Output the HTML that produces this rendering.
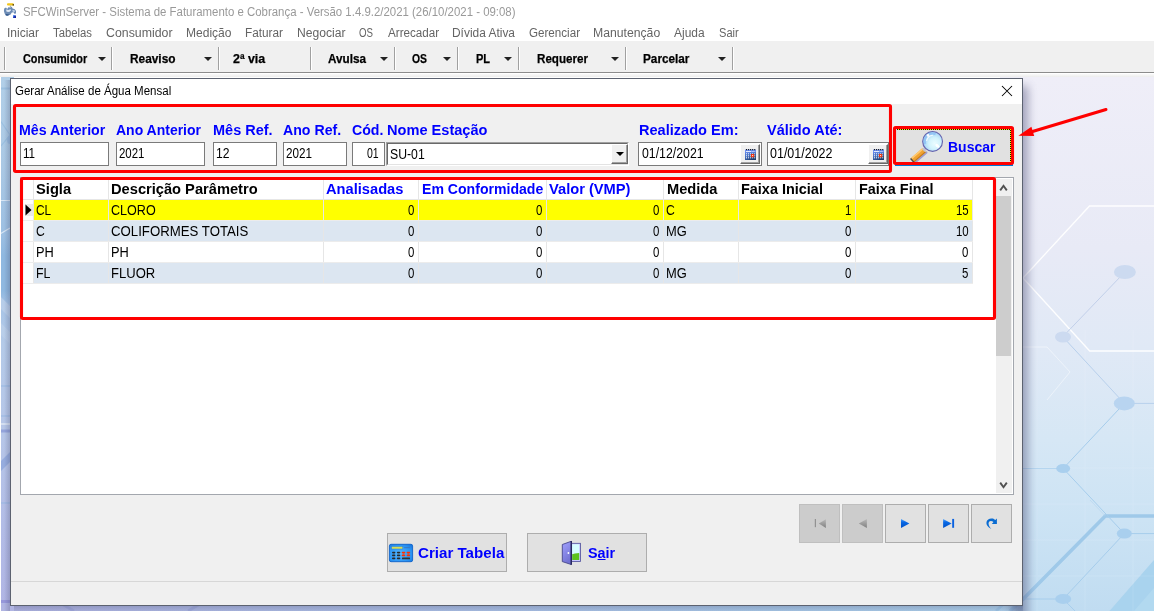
<!DOCTYPE html>
<html><head><meta charset="utf-8"><title>SFCWinServer</title><style>
html,body{margin:0;padding:0;}
body{width:1154px;height:611px;position:relative;overflow:hidden;background:#fff;font-family:"Liberation Sans",sans-serif;}
.t{position:absolute;white-space:nowrap;transform-origin:0 50%;}
.r{position:absolute;}
.tri{position:absolute;width:0;height:0;border-left:4px solid transparent;border-right:4px solid transparent;border-top:4px solid #222;}
#dlg{position:absolute;left:10px;top:78px;width:1013px;height:528px;box-sizing:border-box;background:#f0f0f0;border:1px solid #5c6270;}
</style></head><body>
<svg class="r" style="left:0;top:77px" width="1154" height="534" viewBox="0 77 1154 534">
<defs>
<linearGradient id="gR" gradientUnits="userSpaceOnUse" x1="0" y1="77" x2="0" y2="611">
<stop offset="0" stop-color="#efeef8"/><stop offset="0.32" stop-color="#e8eaf6"/><stop offset="0.51" stop-color="#e0e9f6"/><stop offset="0.68" stop-color="#d6e7f5"/><stop offset="0.83" stop-color="#cce3f4"/><stop offset="1" stop-color="#c0dcf1"/>
</linearGradient>
<linearGradient id="gL" gradientUnits="userSpaceOnUse" x1="0" y1="77" x2="0" y2="611">
<stop offset="0" stop-color="#b2cfe8"/><stop offset="0.167" stop-color="#aac8e4"/><stop offset="0.296" stop-color="#9cbfe2"/><stop offset="0.335" stop-color="#8fb8e0"/><stop offset="0.4" stop-color="#8fb8e0"/><stop offset="0.43" stop-color="#a8c4e6"/><stop offset="0.5" stop-color="#b4cae8"/><stop offset="0.67" stop-color="#b6c6e8"/><stop offset="0.84" stop-color="#b2bce6"/><stop offset="1" stop-color="#b0b4e4"/>
</linearGradient>
<linearGradient id="gB" gradientUnits="userSpaceOnUse" x1="0" y1="0" x2="1030" y2="0">
<stop offset="0" stop-color="#b0b4e2"/><stop offset="0.38" stop-color="#adc0e6"/><stop offset="0.75" stop-color="#a9cae9"/><stop offset="1" stop-color="#b0d4ee"/>
</linearGradient>
<linearGradient id="shR" gradientUnits="userSpaceOnUse" x1="1023" y1="0" x2="1036" y2="0">
<stop offset="0" stop-color="#303050" stop-opacity="0.38"/><stop offset="0.4" stop-color="#303050" stop-opacity="0.17"/><stop offset="1" stop-color="#303050" stop-opacity="0"/>
</linearGradient>
<linearGradient id="shB" gradientUnits="userSpaceOnUse" x1="0" y1="606" x2="0" y2="614">
<stop offset="0" stop-color="#303058" stop-opacity="0.22"/><stop offset="1" stop-color="#303058" stop-opacity="0"/>
</linearGradient>
<linearGradient id="shL" gradientUnits="userSpaceOnUse" x1="4" y1="0" x2="10" y2="0">
<stop offset="0" stop-color="#303050" stop-opacity="0"/><stop offset="1" stop-color="#303050" stop-opacity="0.22"/>
</linearGradient>
<filter id="shblur" x="-200%" y="-5%" width="500%" height="110%"><feGaussianBlur stdDeviation="5"/></filter>
<filter id="soft" x="-20%" y="-20%" width="140%" height="140%"><feGaussianBlur stdDeviation="0.5"/></filter>
</defs>
<rect x="1000" y="77" width="154" height="534" fill="url(#gR)"/>
<rect x="0" y="77" width="14" height="534" fill="url(#gL)"/>
<rect x="0" y="604" width="1023" height="7" fill="url(#gB)"/>
<!-- lower-right saturated wedge -->
<path d="M1154 560 L1109.5 611 L1154 611 Z" fill="#a9d3ee"/>
<path d="M1154 588 L1134 611 L1154 611 Z" fill="#b2d9f0"/>
<!-- faint grid -->
<g stroke="#ffffff" stroke-width="1" opacity="0.10">
<path d="M1037 330V611M1085 330V611M1133 330V611"/>
<path d="M1023 468H1154M1023 504H1154M1023 540H1154M1023 576H1154"/>
</g>
<!-- thick pale band hexagon -->
<path d="M1154 516 L1105.3 516 L1023.3 599 L1010 611" stroke="#9fc9e9" stroke-width="3.6" fill="none" filter="url(#soft)"/>
<path d="M1105.3 516 L1090 500" stroke="#b4d4ee" stroke-width="1" fill="none" opacity="0.6"/>
<!-- white hexagon -->
<path d="M1154 206 L1089.5 206 L1023 278 L1089.7 351 L1154 351" stroke="#ffffff" stroke-width="1.3" fill="none" opacity="0.95"/>
<path d="M1000 300 L1023 278" stroke="#ffffff" stroke-width="1" fill="none" opacity="0.6"/>
<!-- thin blue lines -->
<g stroke="#c2d0ea" stroke-width="1" fill="none">
<path d="M1124.9 272 L1063 336.5"/>
</g>
<g stroke="#a6cdec" stroke-width="1" fill="none">
<path d="M1063 337 L1124.3 403.4 L1154 403.4" stroke="#b8d0ec"/>
<path d="M1023 347 L1047 347 L1070 372 L1047 400" stroke="#ffffff" opacity="0.45"/>
<path d="M1124.3 403.4 L1063.2 468.5 L1124.3 533.6 L1154 533.6"/>
<path d="M1063.2 468.5 L1015 468.5" opacity="0.7"/>
<path d="M1124.3 533.6 L1063.2 599 L1015 599"/>
<path d="M1063.2 599 L1075 611"/>
</g>
<!-- nodes -->
<g fill="#ccdaf0">
<ellipse cx="1124.9" cy="272" rx="11" ry="7"/>
<ellipse cx="1063" cy="337" rx="8" ry="5.5"/>
</g>
<g fill="#a9cfee">
<ellipse cx="1124.3" cy="403.4" rx="10.5" ry="7" fill="#b8d4f0"/>
<ellipse cx="1063.2" cy="468.5" rx="7" ry="4.5"/>
<ellipse cx="1124.3" cy="533.6" rx="7.5" ry="5"/>
<ellipse cx="1063.2" cy="599" rx="8" ry="5"/>
</g>
<!-- left strip details -->
<g stroke="#9abfe0" stroke-width="1.2" fill="none" opacity="0.9">
<path d="M0 88.5 L10 88.5" stroke-width="2"/>
<path d="M1 121.6 L10 135 L1 146"/>
</g>
<ellipse cx="10" cy="140" rx="3" ry="4" fill="#98bbe0"/>
<path d="M0 200.5 L10 200.5 M0 234 L10 228" stroke="#e4eef8" stroke-width="1.2" opacity="0.8" fill="none"/>
<path d="M0 296 L10 306 L10 318 L0 308 Z M0 322 L10 332 L10 344 L0 334 Z" fill="#bcd0ea" opacity="0.8"/>
<path d="M0 386 L10 386 M0 416 L10 416 M0 503 L10 503" stroke="#8fb4e0" stroke-width="1" opacity="0.8"/>
<path d="M0 424 L10 424" stroke="#dce6f4" stroke-width="2" opacity="0.8"/>
<path d="M0 431 L10 431" stroke="#8c9cd8" stroke-width="3" opacity="0.8"/>
<path d="M0 462 L10 452 L10 462 L0 472 Z" fill="#90a8dc" opacity="0.85"/>
<path d="M0 601.5 L10 601.5" stroke="#9090d8" stroke-width="3" opacity="0.8"/>
<!-- bottom strip details -->
<g stroke="#98a2d8" stroke-width="3" opacity="0.55" fill="none"><path d="M62 604 L74 611"/><path d="M200 604 L188 611"/></g>
<path d="M996 611 L1010 598" stroke="#9cc6e8" stroke-width="3" opacity="0.8"/>
<!-- dialog shadows -->
<rect x="1012" y="86" width="16" height="544" fill="#3a3a68" opacity="0.42" filter="url(#shblur)"/>
<rect x="14" y="606" width="1009" height="5" fill="url(#shB)"/>
<rect x="4" y="80" width="6" height="531" fill="url(#shL)"/>
</svg>

<div class="r" style="left:0px;top:77px;width:1px;height:534px;background:#fff;"></div>
<div class="r" style="left:0px;top:0px;width:1154px;height:22px;background:#fff;"></div>
<svg class="r" style="left:3px;top:2px" width="16" height="18" viewBox="3 2 16 18">
<rect x="7" y="3.2" width="6.8" height="2.4" rx="1" fill="#f2c418"/>
<rect x="12.6" y="4" width="1.3" height="1.7" fill="#5a4a10"/>
<rect x="9.8" y="5.4" width="1.4" height="2" fill="#b9b9a0"/>
<path d="M4.2 8.6 L6 7.4 L7.2 9 L8.4 7.2 L10.4 7.6 L11.8 6.8 L12.6 8.6 L14.8 9.2 L16 11 L16 13.6 L14.4 13.8 L13.6 12.2 L11.8 12.6 L10.4 14.8 L8 15.6 L5.8 15.4 L4.6 13.4 L3.9 11 Z" fill="#6c8bb4"/>
<path d="M6 9.6 L8.8 10 L10.4 9 L11 10.6 L9.2 12 L6.6 11.8 Z" fill="#dfe8f3"/>
<path d="M12.4 10 L14.6 10.2 L14.8 12 L12.8 11.8 Z" fill="#c9d7ea"/>
<path d="M5.6 14 L9.4 14.4 L8 15.7 L6 15.5 Z" fill="#2f5488"/>
<rect x="13" y="15.3" width="2.8" height="2.6" fill="#1530c0"/>
<rect x="13" y="15.3" width="1.3" height="1.2" fill="#5fa8ff"/>
<rect x="14.6" y="16.4" width="1.3" height="1.5" fill="#071480"/>
</svg>

<div class="t" style="left:23.00px;top:6.04px;font-size:12px;line-height:12px;color:#999;transform:scaleX(0.9515);">SFCWinServer - Sistema de Faturamento e Cobrança - Versão 1.4.9.2/2021 (26/10/2021 - 09:08)</div>
<div class="r" style="left:0px;top:22px;width:1154px;height:19px;background:#fff;"></div>
<div class="t" style="left:7.00px;top:26.84px;font-size:12px;line-height:12px;color:#646464;transform:scaleX(0.9997);">Iniciar</div>
<div class="t" style="left:53.00px;top:26.84px;font-size:12px;line-height:12px;color:#646464;transform:scaleX(0.9429);">Tabelas</div>
<div class="t" style="left:105.50px;top:26.84px;font-size:12px;line-height:12px;color:#646464;transform:scaleX(1.0279);">Consumidor</div>
<div class="t" style="left:185.50px;top:26.84px;font-size:12px;line-height:12px;color:#646464;transform:scaleX(1.0031);">Medição</div>
<div class="t" style="left:245.00px;top:26.84px;font-size:12px;line-height:12px;color:#646464;transform:scaleX(0.9824);">Faturar</div>
<div class="t" style="left:296.50px;top:26.84px;font-size:12px;line-height:12px;color:#646464;transform:scaleX(1.0099);">Negociar</div>
<div class="t" style="left:359.00px;top:26.84px;font-size:12px;line-height:12px;color:#646464;transform:scaleX(0.8075);">OS</div>
<div class="t" style="left:387.50px;top:26.84px;font-size:12px;line-height:12px;color:#646464;transform:scaleX(0.9717);">Arrecadar</div>
<div class="t" style="left:452.00px;top:26.84px;font-size:12px;line-height:12px;color:#646464;transform:scaleX(0.9942);">Dívida Ativa</div>
<div class="t" style="left:529.00px;top:26.84px;font-size:12px;line-height:12px;color:#646464;transform:scaleX(0.9679);">Gerenciar</div>
<div class="t" style="left:592.80px;top:26.84px;font-size:12px;line-height:12px;color:#646464;transform:scaleX(1.0174);">Manutenção</div>
<div class="t" style="left:674.00px;top:26.84px;font-size:12px;line-height:12px;color:#646464;transform:scaleX(0.9970);">Ajuda</div>
<div class="t" style="left:718.80px;top:26.84px;font-size:12px;line-height:12px;color:#646464;transform:scaleX(0.9231);">Sair</div>
<div class="r" style="left:0px;top:41px;width:1154px;height:32px;background:#f0f0f0;border-bottom:1px solid #8c8c8c;box-sizing:border-box;"></div>
<div class="r" style="left:0px;top:73px;width:1154px;height:1px;background:#fff;"></div>
<div class="r" style="left:0px;top:74px;width:1154px;height:3px;background:linear-gradient(180deg,#fafafa,#ececec);"></div>
<div class="t" style="left:22.50px;top:53.42px;font-size:12.5px;line-height:12.5px;color:#000;transform:scaleX(0.8722);font-weight:bold;-webkit-text-stroke:0.25px #000;">Consumidor</div>
<div class="tri" style="left:97.5px;top:57px;"></div>
<div class="t" style="left:129.70px;top:53.42px;font-size:12.5px;line-height:12.5px;color:#000;transform:scaleX(0.9490);font-weight:bold;-webkit-text-stroke:0.25px #000;">Reaviso</div>
<div class="tri" style="left:204.3px;top:57px;"></div>
<div class="t" style="left:232.70px;top:53.42px;font-size:12.5px;line-height:12.5px;color:#000;transform:scaleX(0.9929);font-weight:bold;-webkit-text-stroke:0.25px #000;">2ª via</div>
<div class="t" style="left:328.00px;top:53.42px;font-size:12.5px;line-height:12.5px;color:#000;transform:scaleX(0.9351);font-weight:bold;-webkit-text-stroke:0.25px #000;">Avulsa</div>
<div class="tri" style="left:380.2px;top:57px;"></div>
<div class="t" style="left:412.40px;top:53.42px;font-size:12.5px;line-height:12.5px;color:#000;transform:scaleX(0.8305);font-weight:bold;-webkit-text-stroke:0.25px #000;">OS</div>
<div class="tri" style="left:443.0px;top:57px;"></div>
<div class="t" style="left:475.50px;top:53.42px;font-size:12.5px;line-height:12.5px;color:#000;transform:scaleX(0.8827);font-weight:bold;-webkit-text-stroke:0.25px #000;">PL</div>
<div class="tri" style="left:504.2px;top:57px;"></div>
<div class="t" style="left:536.60px;top:53.42px;font-size:12.5px;line-height:12.5px;color:#000;transform:scaleX(0.9292);font-weight:bold;-webkit-text-stroke:0.25px #000;">Requerer</div>
<div class="tri" style="left:611.2px;top:57px;"></div>
<div class="t" style="left:643.40px;top:53.42px;font-size:12.5px;line-height:12.5px;color:#000;transform:scaleX(0.9403);font-weight:bold;-webkit-text-stroke:0.25px #000;">Parcelar</div>
<div class="tri" style="left:718.0px;top:57px;"></div>
<div class="r" style="left:4px;top:47px;width:1px;height:23px;background:#a0a0a0;"></div>
<div class="r" style="left:5px;top:47px;width:1px;height:23px;background:#fff;"></div>
<div class="r" style="left:111px;top:47px;width:1px;height:23px;background:#a0a0a0;"></div>
<div class="r" style="left:112px;top:47px;width:1px;height:23px;background:#fff;"></div>
<div class="r" style="left:218px;top:47px;width:1px;height:23px;background:#a0a0a0;"></div>
<div class="r" style="left:219px;top:47px;width:1px;height:23px;background:#fff;"></div>
<div class="r" style="left:310px;top:47px;width:1px;height:23px;background:#a0a0a0;"></div>
<div class="r" style="left:311px;top:47px;width:1px;height:23px;background:#fff;"></div>
<div class="r" style="left:394px;top:47px;width:1px;height:23px;background:#a0a0a0;"></div>
<div class="r" style="left:395px;top:47px;width:1px;height:23px;background:#fff;"></div>
<div class="r" style="left:457px;top:47px;width:1px;height:23px;background:#a0a0a0;"></div>
<div class="r" style="left:458px;top:47px;width:1px;height:23px;background:#fff;"></div>
<div class="r" style="left:518px;top:47px;width:1px;height:23px;background:#a0a0a0;"></div>
<div class="r" style="left:519px;top:47px;width:1px;height:23px;background:#fff;"></div>
<div class="r" style="left:625px;top:47px;width:1px;height:23px;background:#a0a0a0;"></div>
<div class="r" style="left:626px;top:47px;width:1px;height:23px;background:#fff;"></div>
<div class="r" style="left:732px;top:47px;width:1px;height:23px;background:#a0a0a0;"></div>
<div class="r" style="left:733px;top:47px;width:1px;height:23px;background:#fff;"></div>
<div id="dlg"></div>
<div class="r" style="left:11px;top:79px;width:1011px;height:25px;background:#fff;"></div>
<div class="t" style="left:14.70px;top:84.84px;font-size:12px;line-height:12px;color:#000;transform:scaleX(0.9597);">Gerar Análise de Água Mensal</div>
<svg class="r" style="left:1000.8px;top:85px" width="12" height="12" viewBox="0 0 12 12"><path d="M1 1 L11 11 M11 1 L1 11" stroke="#000" stroke-width="1.05" fill="none"/></svg>
<div class="t" style="left:18.70px;top:122.73px;font-size:14.5px;line-height:14.5px;color:#0000ff;transform:scaleX(0.9797);font-weight:bold;">Mês Anterior</div>
<div class="t" style="left:116.00px;top:122.73px;font-size:14.5px;line-height:14.5px;color:#0000ff;transform:scaleX(0.9651);font-weight:bold;">Ano Anterior</div>
<div class="t" style="left:213.40px;top:122.73px;font-size:14.5px;line-height:14.5px;color:#0000ff;transform:scaleX(0.9995);font-weight:bold;">Mês Ref.</div>
<div class="t" style="left:282.80px;top:122.73px;font-size:14.5px;line-height:14.5px;color:#0000ff;transform:scaleX(0.9764);font-weight:bold;">Ano Ref.</div>
<div class="t" style="left:352.00px;top:122.73px;font-size:14.5px;line-height:14.5px;color:#0000ff;transform:scaleX(0.9747);font-weight:bold;">Cód.</div>
<div class="t" style="left:387.00px;top:122.73px;font-size:14.5px;line-height:14.5px;color:#0000ff;transform:scaleX(1.0057);font-weight:bold;">Nome Estação</div>
<div class="t" style="left:638.50px;top:122.73px;font-size:14.5px;line-height:14.5px;color:#0000ff;transform:scaleX(1.0039);font-weight:bold;">Realizado Em:</div>
<div class="t" style="left:767.00px;top:122.73px;font-size:14.5px;line-height:14.5px;color:#0000ff;transform:scaleX(1.0028);font-weight:bold;">Válido Até:</div>
<div class="r" style="left:20px;top:142px;width:89px;height:24px;background:#fff;border:1px solid #7a7a7a;box-sizing:border-box;"></div>
<div class="r" style="left:116px;top:142px;width:89px;height:24px;background:#fff;border:1px solid #7a7a7a;box-sizing:border-box;"></div>
<div class="r" style="left:213px;top:142px;width:64px;height:24px;background:#fff;border:1px solid #7a7a7a;box-sizing:border-box;"></div>
<div class="r" style="left:283px;top:142px;width:64px;height:24px;background:#fff;border:1px solid #7a7a7a;box-sizing:border-box;"></div>
<div class="r" style="left:352px;top:142px;width:33px;height:24px;background:#fff;border:1px solid #7a7a7a;box-sizing:border-box;"></div>
<div class="r" style="left:638px;top:142px;width:124px;height:24px;background:#fff;border:1px solid #7a7a7a;box-sizing:border-box;"></div>
<div class="r" style="left:767px;top:142px;width:122px;height:24px;background:#fff;border:1px solid #7a7a7a;box-sizing:border-box;"></div>
<div class="r" style="left:386px;top:142px;width:243px;height:24px;background:#fff;box-sizing:border-box;border-top:1px solid #a0a0a0;border-left:1px solid #a0a0a0;border-right:1px solid #fff;border-bottom:1px solid #fff;"></div>
<div class="r" style="left:387px;top:143px;width:241px;height:22px;box-sizing:border-box;border-top:1px solid #696969;border-left:1px solid #696969;border-right:1px solid #e3e3e3;border-bottom:1px solid #e3e3e3;"></div>
<div class="r" style="left:611px;top:144px;width:17px;height:20px;background:#f0f0f0;box-sizing:border-box;border-top:1px solid #fff;border-left:1px solid #fff;border-right:1px solid #696969;border-bottom:1px solid #696969;box-shadow:inset -1px -1px 0 #a0a0a0;"></div>
<div class="tri" style="left:615.5px;top:152px;border-top-color:#000;"></div>
<div class="r" style="left:740px;top:144px;width:20px;height:20px;background:#f0f0f0;box-sizing:border-box;border-top:1px solid #fff;border-left:1px solid #fff;border-right:1px solid #696969;border-bottom:1px solid #696969;box-shadow:inset -1px -1px 0 #a0a0a0;"></div>
<svg class="r" style="left:745px;top:149px" width="11" height="11" viewBox="0 0 11 11"><defs><linearGradient id="cal740" x1="0" y1="0" x2="0.6" y2="1"><stop offset="0" stop-color="#6a8cf0"/><stop offset="0.5" stop-color="#4a74c8"/><stop offset="1" stop-color="#1e3c6c"/></linearGradient></defs><rect x="0" y="0.6" width="11" height="10.4" fill="url(#cal740)"/><rect x="0" y="1.2" width="11" height="2.2" fill="#6f92f4"/><rect x="1" y="2" width="5" height="0.9" fill="#fff" opacity="0.9"/><rect x="6.4" y="2" width="3.4" height="0.9" fill="#cfdcff" opacity="0.7"/><rect x="1.00" y="0" width="1" height="1.2" fill="#111"/><rect x="3.05" y="0" width="1" height="1.2" fill="#111"/><rect x="5.10" y="0" width="1" height="1.2" fill="#111"/><rect x="7.15" y="0" width="1" height="1.2" fill="#111"/><rect x="9.20" y="0" width="1" height="1.2" fill="#111"/><rect x="1.00" y="4.30" width="1" height="1" fill="#fff"/><rect x="3.05" y="4.30" width="1" height="1" fill="#fff"/><rect x="5.10" y="4.30" width="1" height="1" fill="#fff"/><rect x="7.15" y="4.30" width="1" height="1" fill="#fff"/><rect x="9.20" y="4.30" width="1" height="1" fill="#fff"/><rect x="1.00" y="6.30" width="1" height="1" fill="#fff"/><rect x="3.05" y="6.30" width="1" height="1" fill="#fff"/><rect x="5.10" y="6.30" width="1" height="1" fill="#fff"/><rect x="7.15" y="6.30" width="1" height="1" fill="#fff"/><rect x="9.20" y="6.30" width="1" height="1" fill="#fff"/><rect x="1.00" y="8.30" width="1" height="1" fill="#fff"/><rect x="3.05" y="8.30" width="1" height="1" fill="#fff"/><rect x="5.10" y="8.30" width="1" height="1" fill="#fff"/><rect x="7.15" y="8.30" width="1" height="1" fill="#fff"/><rect x="9.20" y="8.30" width="1" height="1" fill="#fff"/><rect x="6" y="5" width="3.2" height="3.2" fill="#f03410"/><rect x="7.1" y="6.1" width="1" height="1" fill="#fff"/></svg>
<div class="r" style="left:868px;top:144px;width:20px;height:20px;background:#f0f0f0;box-sizing:border-box;border-top:1px solid #fff;border-left:1px solid #fff;border-right:1px solid #696969;border-bottom:1px solid #696969;box-shadow:inset -1px -1px 0 #a0a0a0;"></div>
<svg class="r" style="left:873px;top:149px" width="11" height="11" viewBox="0 0 11 11"><defs><linearGradient id="cal868" x1="0" y1="0" x2="0.6" y2="1"><stop offset="0" stop-color="#6a8cf0"/><stop offset="0.5" stop-color="#4a74c8"/><stop offset="1" stop-color="#1e3c6c"/></linearGradient></defs><rect x="0" y="0.6" width="11" height="10.4" fill="url(#cal868)"/><rect x="0" y="1.2" width="11" height="2.2" fill="#6f92f4"/><rect x="1" y="2" width="5" height="0.9" fill="#fff" opacity="0.9"/><rect x="6.4" y="2" width="3.4" height="0.9" fill="#cfdcff" opacity="0.7"/><rect x="1.00" y="0" width="1" height="1.2" fill="#111"/><rect x="3.05" y="0" width="1" height="1.2" fill="#111"/><rect x="5.10" y="0" width="1" height="1.2" fill="#111"/><rect x="7.15" y="0" width="1" height="1.2" fill="#111"/><rect x="9.20" y="0" width="1" height="1.2" fill="#111"/><rect x="1.00" y="4.30" width="1" height="1" fill="#fff"/><rect x="3.05" y="4.30" width="1" height="1" fill="#fff"/><rect x="5.10" y="4.30" width="1" height="1" fill="#fff"/><rect x="7.15" y="4.30" width="1" height="1" fill="#fff"/><rect x="9.20" y="4.30" width="1" height="1" fill="#fff"/><rect x="1.00" y="6.30" width="1" height="1" fill="#fff"/><rect x="3.05" y="6.30" width="1" height="1" fill="#fff"/><rect x="5.10" y="6.30" width="1" height="1" fill="#fff"/><rect x="7.15" y="6.30" width="1" height="1" fill="#fff"/><rect x="9.20" y="6.30" width="1" height="1" fill="#fff"/><rect x="1.00" y="8.30" width="1" height="1" fill="#fff"/><rect x="3.05" y="8.30" width="1" height="1" fill="#fff"/><rect x="5.10" y="8.30" width="1" height="1" fill="#fff"/><rect x="7.15" y="8.30" width="1" height="1" fill="#fff"/><rect x="9.20" y="8.30" width="1" height="1" fill="#fff"/><rect x="6" y="5" width="3.2" height="3.2" fill="#f03410"/><rect x="7.1" y="6.1" width="1" height="1" fill="#fff"/></svg>
<div class="t" style="left:23.40px;top:146.35px;font-size:14px;line-height:14px;color:#000;transform:scaleX(0.8325);">11</div>
<div class="t" style="left:119.30px;top:146.35px;font-size:14px;line-height:14px;color:#000;transform:scaleX(0.8187);">2021</div>
<div class="t" style="left:216.00px;top:146.35px;font-size:14px;line-height:14px;color:#000;transform:scaleX(0.8669);">12</div>
<div class="t" style="left:286.30px;top:146.35px;font-size:14px;line-height:14px;color:#000;transform:scaleX(0.8348);">2021</div>
<div class="t" style="left:367.30px;top:146.35px;font-size:14px;line-height:14px;color:#000;transform:scaleX(0.7513);">01</div>
<div class="t" style="left:389.50px;top:147.15px;font-size:14px;line-height:14px;color:#000;transform:scaleX(0.8744);">SU-01</div>
<div class="t" style="left:641.60px;top:146.35px;font-size:14px;line-height:14px;color:#000;transform:scaleX(0.8791);">01/12/2021</div>
<div class="t" style="left:770.40px;top:146.35px;font-size:14px;line-height:14px;color:#000;transform:scaleX(0.8920);">01/01/2022</div>
<div class="r" style="left:895px;top:127px;width:118px;height:39px;background:#e1e1e1;border:1px solid #0078d7;box-sizing:border-box;"></div>
<svg class="r" style="left:908px;top:129px" width="40" height="34" viewBox="908 129 40 34">
<defs>
<radialGradient id="lens" cx="0.6" cy="0.6" r="0.72">
<stop offset="0" stop-color="#eafcff"/><stop offset="0.4" stop-color="#d2f3fc"/><stop offset="0.75" stop-color="#a6d4f6"/><stop offset="1" stop-color="#7fb2ec"/>
</radialGradient>
</defs>
<path d="M926.2 152.6 L915.2 162" stroke="#8a88c8" stroke-width="2.4" stroke-linecap="round" opacity="0.75"/>
<path d="M924 150.2 L912.2 160.4" stroke="#f0a232" stroke-width="5.2" stroke-linecap="butt"/>
<path d="M922.8 148.9 L911.2 158.9" stroke="#ffc970" stroke-width="1.5"/>
<path d="M925.4 151.9 L913.8 161.9" stroke="#c47a1a" stroke-width="1.2"/>
<path d="M910.6 158.5 L914.2 162.6" stroke="#4c4844" stroke-width="1.4"/>
<path d="M926.2 147.8 L923.2 150.4" stroke="#c4c4cc" stroke-width="3.6"/>
<circle cx="932.6" cy="141.4" r="9.9" fill="url(#lens)" stroke="#6664ae" stroke-width="1.15"/>
<path d="M925.3 144 A7.6 7.6 0 0 1 935.6 134.3" stroke="#8fc2f4" stroke-width="2.2" fill="none" opacity="0.9"/>
<path d="M926.6 141 A6.2 6.2 0 0 1 932.8 135.4" stroke="#ffffff" stroke-width="1.2" fill="none" opacity="0.8"/>
<ellipse cx="937.4" cy="145.8" rx="2.3" ry="1.5" fill="#fff" opacity="0.95" transform="rotate(40 937.4 145.8)"/>
<ellipse cx="928" cy="135.4" rx="1.3" ry="1.3" fill="#fff" opacity="0.95"/>
</svg>

<div class="t" style="left:947.60px;top:139.53px;font-size:14.5px;line-height:14.5px;color:#0000ff;transform:scaleX(0.9641);font-weight:bold;">Buscar</div>
<div class="r" style="left:20px;top:177px;width:994px;height:318px;background:#fff;border:1px solid #a3a7ae;box-sizing:border-box;"></div>
<div class="r" style="left:23px;top:180px;width:949px;height:19px;background:#fff;"></div>
<div class="r" style="left:33px;top:180px;width:1px;height:104px;background:#e6e6e6;"></div>
<div class="r" style="left:108px;top:180px;width:1px;height:104px;background:#e6e6e6;"></div>
<div class="r" style="left:323px;top:180px;width:1px;height:104px;background:#e6e6e6;"></div>
<div class="r" style="left:418px;top:180px;width:1px;height:104px;background:#e6e6e6;"></div>
<div class="r" style="left:546px;top:180px;width:1px;height:104px;background:#e6e6e6;"></div>
<div class="r" style="left:663px;top:180px;width:1px;height:104px;background:#e6e6e6;"></div>
<div class="r" style="left:738px;top:180px;width:1px;height:104px;background:#e6e6e6;"></div>
<div class="r" style="left:855px;top:180px;width:1px;height:104px;background:#e6e6e6;"></div>
<div class="r" style="left:972px;top:180px;width:1px;height:104px;background:#e6e6e6;"></div>
<div class="r" style="left:23px;top:199px;width:950px;height:1px;background:#e6e6e6;"></div>
<div class="r" style="left:34px;top:200px;width:74px;height:20px;background:#ffff00;"></div>
<div class="r" style="left:109px;top:200px;width:214px;height:20px;background:#ffff00;"></div>
<div class="r" style="left:324px;top:200px;width:94px;height:20px;background:#ffff00;"></div>
<div class="r" style="left:419px;top:200px;width:127px;height:20px;background:#ffff00;"></div>
<div class="r" style="left:547px;top:200px;width:116px;height:20px;background:#ffff00;"></div>
<div class="r" style="left:664px;top:200px;width:74px;height:20px;background:#ffff00;"></div>
<div class="r" style="left:739px;top:200px;width:116px;height:20px;background:#ffff00;"></div>
<div class="r" style="left:856px;top:200px;width:116px;height:20px;background:#ffff00;"></div>
<div class="r" style="left:23px;top:220px;width:950px;height:1px;background:#ececec;"></div>
<div class="r" style="left:23px;top:200px;width:10px;height:20px;background:#fdfdfd;"></div>
<div class="r" style="left:34px;top:221px;width:74px;height:20px;background:#dce6f1;"></div>
<div class="r" style="left:109px;top:221px;width:214px;height:20px;background:#dce6f1;"></div>
<div class="r" style="left:324px;top:221px;width:94px;height:20px;background:#dce6f1;"></div>
<div class="r" style="left:419px;top:221px;width:127px;height:20px;background:#dce6f1;"></div>
<div class="r" style="left:547px;top:221px;width:116px;height:20px;background:#dce6f1;"></div>
<div class="r" style="left:664px;top:221px;width:74px;height:20px;background:#dce6f1;"></div>
<div class="r" style="left:739px;top:221px;width:116px;height:20px;background:#dce6f1;"></div>
<div class="r" style="left:856px;top:221px;width:116px;height:20px;background:#dce6f1;"></div>
<div class="r" style="left:23px;top:241px;width:950px;height:1px;background:#ececec;"></div>
<div class="r" style="left:23px;top:221px;width:10px;height:20px;background:#fdfdfd;"></div>
<div class="r" style="left:34px;top:242px;width:74px;height:20px;background:#ffffff;"></div>
<div class="r" style="left:109px;top:242px;width:214px;height:20px;background:#ffffff;"></div>
<div class="r" style="left:324px;top:242px;width:94px;height:20px;background:#ffffff;"></div>
<div class="r" style="left:419px;top:242px;width:127px;height:20px;background:#ffffff;"></div>
<div class="r" style="left:547px;top:242px;width:116px;height:20px;background:#ffffff;"></div>
<div class="r" style="left:664px;top:242px;width:74px;height:20px;background:#ffffff;"></div>
<div class="r" style="left:739px;top:242px;width:116px;height:20px;background:#ffffff;"></div>
<div class="r" style="left:856px;top:242px;width:116px;height:20px;background:#ffffff;"></div>
<div class="r" style="left:23px;top:262px;width:950px;height:1px;background:#ececec;"></div>
<div class="r" style="left:23px;top:242px;width:10px;height:20px;background:#fdfdfd;"></div>
<div class="r" style="left:34px;top:263px;width:74px;height:20px;background:#dce6f1;"></div>
<div class="r" style="left:109px;top:263px;width:214px;height:20px;background:#dce6f1;"></div>
<div class="r" style="left:324px;top:263px;width:94px;height:20px;background:#dce6f1;"></div>
<div class="r" style="left:419px;top:263px;width:127px;height:20px;background:#dce6f1;"></div>
<div class="r" style="left:547px;top:263px;width:116px;height:20px;background:#dce6f1;"></div>
<div class="r" style="left:664px;top:263px;width:74px;height:20px;background:#dce6f1;"></div>
<div class="r" style="left:739px;top:263px;width:116px;height:20px;background:#dce6f1;"></div>
<div class="r" style="left:856px;top:263px;width:116px;height:20px;background:#dce6f1;"></div>
<div class="r" style="left:23px;top:283px;width:950px;height:1px;background:#ececec;"></div>
<div class="r" style="left:23px;top:263px;width:10px;height:20px;background:#fdfdfd;"></div>
<div class="r" style="left:25px;top:204px;width:8px;height:12px;background:#e9e9e9;"></div>
<svg class="r" style="left:25px;top:204px" width="7" height="12" viewBox="0 0 7 12"><path d="M0.5 0.5 L6.5 6 L0.5 11.5 Z" fill="#000"/></svg>
<div class="t" style="left:36.40px;top:182.15px;font-size:14px;line-height:14px;color:#000;transform:scaleX(1.0492);font-weight:bold;">Sigla</div>
<div class="t" style="left:111.20px;top:182.15px;font-size:14px;line-height:14px;color:#000;transform:scaleX(1.0466);font-weight:bold;">Descrição Parâmetro</div>
<div class="t" style="left:326.00px;top:182.15px;font-size:14px;line-height:14px;color:#0000ff;transform:scaleX(1.0470);font-weight:bold;">Analisadas</div>
<div class="t" style="left:421.50px;top:182.15px;font-size:14px;line-height:14px;color:#0000ff;transform:scaleX(1.0061);font-weight:bold;">Em Conformidade</div>
<div class="t" style="left:549.00px;top:182.15px;font-size:14px;line-height:14px;color:#0000ff;transform:scaleX(1.0476);font-weight:bold;">Valor (VMP)</div>
<div class="t" style="left:666.60px;top:182.15px;font-size:14px;line-height:14px;color:#000;transform:scaleX(1.0450);font-weight:bold;">Medida</div>
<div class="t" style="left:741.40px;top:182.15px;font-size:14px;line-height:14px;color:#000;transform:scaleX(1.0318);font-weight:bold;">Faixa Inicial</div>
<div class="t" style="left:858.50px;top:182.15px;font-size:14px;line-height:14px;color:#000;transform:scaleX(1.0296);font-weight:bold;">Faixa Final</div>
<div class="t" style="left:36.40px;top:202.95px;font-size:14px;line-height:14px;color:#000;transform:scaleX(0.8493);">CL</div>
<div class="t" style="left:111.40px;top:202.95px;font-size:14px;line-height:14px;color:#000;transform:scaleX(0.8978);">CLORO</div>
<div class="t" style="left:407.84px;top:202.95px;font-size:14px;line-height:14px;color:#000;transform:scaleX(0.8171);">0</div>
<div class="t" style="left:535.84px;top:202.95px;font-size:14px;line-height:14px;color:#000;transform:scaleX(0.8171);">0</div>
<div class="t" style="left:652.84px;top:202.95px;font-size:14px;line-height:14px;color:#000;transform:scaleX(0.8171);">0</div>
<div class="t" style="left:666.40px;top:202.95px;font-size:14px;line-height:14px;color:#000;transform:scaleX(0.8704);">C</div>
<div class="t" style="left:844.84px;top:202.95px;font-size:14px;line-height:14px;color:#000;transform:scaleX(0.8171);">1</div>
<div class="t" style="left:955.67px;top:202.95px;font-size:14px;line-height:14px;color:#000;transform:scaleX(0.8171);">15</div>
<div class="t" style="left:36.40px;top:223.95px;font-size:14px;line-height:14px;color:#000;transform:scaleX(0.8704);">C</div>
<div class="t" style="left:111.40px;top:223.95px;font-size:14px;line-height:14px;color:#000;transform:scaleX(0.9438);">COLIFORMES TOTAIS</div>
<div class="t" style="left:407.84px;top:223.95px;font-size:14px;line-height:14px;color:#000;transform:scaleX(0.8171);">0</div>
<div class="t" style="left:535.84px;top:223.95px;font-size:14px;line-height:14px;color:#000;transform:scaleX(0.8171);">0</div>
<div class="t" style="left:652.84px;top:223.95px;font-size:14px;line-height:14px;color:#000;transform:scaleX(0.8171);">0</div>
<div class="t" style="left:666.40px;top:223.95px;font-size:14px;line-height:14px;color:#000;transform:scaleX(0.9223);">MG</div>
<div class="t" style="left:844.84px;top:223.95px;font-size:14px;line-height:14px;color:#000;transform:scaleX(0.8171);">0</div>
<div class="t" style="left:955.67px;top:223.95px;font-size:14px;line-height:14px;color:#000;transform:scaleX(0.8171);">10</div>
<div class="t" style="left:36.40px;top:244.95px;font-size:14px;line-height:14px;color:#000;transform:scaleX(0.9152);">PH</div>
<div class="t" style="left:111.40px;top:244.95px;font-size:14px;line-height:14px;color:#000;transform:scaleX(0.9152);">PH</div>
<div class="t" style="left:407.84px;top:244.95px;font-size:14px;line-height:14px;color:#000;transform:scaleX(0.8171);">0</div>
<div class="t" style="left:535.84px;top:244.95px;font-size:14px;line-height:14px;color:#000;transform:scaleX(0.8171);">0</div>
<div class="t" style="left:652.84px;top:244.95px;font-size:14px;line-height:14px;color:#000;transform:scaleX(0.8171);">0</div>
<div class="t" style="left:844.84px;top:244.95px;font-size:14px;line-height:14px;color:#000;transform:scaleX(0.8171);">0</div>
<div class="t" style="left:962.04px;top:244.95px;font-size:14px;line-height:14px;color:#000;transform:scaleX(0.8171);">0</div>
<div class="t" style="left:36.40px;top:265.95px;font-size:14px;line-height:14px;color:#000;transform:scaleX(0.8814);">FL</div>
<div class="t" style="left:111.40px;top:265.95px;font-size:14px;line-height:14px;color:#000;transform:scaleX(0.9315);">FLUOR</div>
<div class="t" style="left:407.84px;top:265.95px;font-size:14px;line-height:14px;color:#000;transform:scaleX(0.8171);">0</div>
<div class="t" style="left:535.84px;top:265.95px;font-size:14px;line-height:14px;color:#000;transform:scaleX(0.8171);">0</div>
<div class="t" style="left:652.84px;top:265.95px;font-size:14px;line-height:14px;color:#000;transform:scaleX(0.8171);">0</div>
<div class="t" style="left:666.40px;top:265.95px;font-size:14px;line-height:14px;color:#000;transform:scaleX(0.9223);">MG</div>
<div class="t" style="left:844.84px;top:265.95px;font-size:14px;line-height:14px;color:#000;transform:scaleX(0.8171);">0</div>
<div class="t" style="left:962.04px;top:265.95px;font-size:14px;line-height:14px;color:#000;transform:scaleX(0.8171);">5</div>
<div class="r" style="left:996px;top:179px;width:16px;height:314px;background:#f0f0f0;"></div>
<div class="r" style="left:996px;top:196px;width:15px;height:160px;background:#cdcdcd;"></div>
<svg class="r" style="left:998px;top:183px" width="11" height="9" viewBox="0 0 11 9"><path d="M2.2 7.4 L5.5 2.8 L8.8 7.4" stroke="#505050" stroke-width="1.9" fill="none"/></svg>
<svg class="r" style="left:998px;top:481px" width="11" height="9" viewBox="0 0 11 9"><path d="M2.2 1.6 L5.5 6.2 L8.8 1.6" stroke="#505050" stroke-width="1.9" fill="none"/></svg>
<div class="r" style="left:799px;top:504px;width:41px;height:39px;background:#cccccc;border:1px solid #bfbfbf;box-sizing:border-box;"></div>
<div class="r" style="left:842px;top:504px;width:41px;height:39px;background:#cccccc;border:1px solid #bfbfbf;box-sizing:border-box;"></div>
<div class="r" style="left:885px;top:504px;width:41px;height:39px;background:#e1e1e1;border:1px solid #adadad;box-sizing:border-box;"></div>
<div class="r" style="left:928px;top:504px;width:41px;height:39px;background:#e1e1e1;border:1px solid #adadad;box-sizing:border-box;"></div>
<div class="r" style="left:971px;top:504px;width:41px;height:39px;background:#e1e1e1;border:1px solid #adadad;box-sizing:border-box;"></div>
<svg class="r" style="left:799px;top:504px" width="213" height="39" viewBox="799 504 213 39">
<defs>
<linearGradient id="ng" x1="0" y1="0" x2="0" y2="1"><stop offset="0" stop-color="#b8b8b8"/><stop offset="1" stop-color="#808080"/></linearGradient>
<linearGradient id="nb" x1="0" y1="0" x2="0" y2="1"><stop offset="0" stop-color="#58a8ff"/><stop offset="0.35" stop-color="#0a6ae6"/><stop offset="1" stop-color="#0050c8"/></linearGradient>
</defs>
<rect x="814.8" y="519" width="1.1" height="8.2" fill="#8c8c8c"/>
<path d="M818.8 523.4 L825.9 519.2 L825.9 528 Z" fill="url(#ng)"/>
<path d="M858.8 523.4 L866.9 519 L866.9 528 Z" fill="url(#ng)"/>
<path d="M901 518.9 L909.4 523.4 L901 528 Z" fill="url(#nb)"/>
<path d="M943.1 518.9 L951.6 523.4 L943.1 528 Z" fill="url(#nb)"/>
<rect x="952.2" y="518.9" width="1.9" height="8.9" fill="#0a62e0"/>
<path d="M991.4 529 C987.7 527.2 985.9 524.4 986.5 521.9 C987.2 519.1 990 517.9 993 518.6 L995.3 519.9 L996.9 518.6 L996.9 523.9 L991.8 523.9 L993.5 522.1 C992 520.7 989.9 520.5 988.9 522 C987.9 523.8 989 526.6 991.4 529 Z" fill="#0a6cd2"/>
</svg>

<div class="r" style="left:387px;top:533px;width:120px;height:39px;background:#e1e1e1;border:1px solid #adadad;box-sizing:border-box;"></div>
<div class="r" style="left:527px;top:533px;width:120px;height:39px;background:#e1e1e1;border:1px solid #adadad;box-sizing:border-box;"></div>
<svg class="r" style="left:388px;top:543px" width="26" height="20" viewBox="388 543 26 20">
<defs><radialGradient id="cg" cx="0.45" cy="0.55" r="0.7"><stop offset="0" stop-color="#58b8ff"/><stop offset="0.7" stop-color="#2a94f4"/><stop offset="1" stop-color="#1878e0"/></radialGradient></defs>
<rect x="389.4" y="544.3" width="23.2" height="17.4" rx="1.6" fill="url(#cg)" stroke="#0f62c8" stroke-width="0.9"/>
<rect x="391.6" y="546.5" width="11.2" height="2.5" fill="#d4de58" stroke="#2f7ed8" stroke-width="0.5"/>
<rect x="404.2" y="547" width="5.6" height="1.2" fill="#3a74b8" opacity="0.7"/>
<g fill="#2a2a2a">
<rect x="392" y="551.7" width="3.4" height="1.7" rx="0.8"/><rect x="396.9" y="551.7" width="3.4" height="1.7" rx="0.8"/>
<rect x="392" y="554.6" width="3.4" height="1.7" rx="0.8"/><rect x="396.9" y="554.6" width="3.4" height="1.7" rx="0.8"/>
<rect x="392" y="557.6" width="3.4" height="1.7" rx="0.8"/><rect x="396.9" y="557.6" width="3.4" height="1.7" rx="0.8"/>
<rect x="402" y="557.6" width="8" height="1.7" rx="0.4" fill="#333"/>
</g>
<g fill="#ff3000">
<rect x="401.7" y="551.7" width="3.6" height="1.7" rx="0.8"/><rect x="406.6" y="551.7" width="3.6" height="1.7" rx="0.8"/>
<rect x="401.7" y="554.6" width="3.6" height="1.7" rx="0.8"/><rect x="406.6" y="554.6" width="3.6" height="1.7" rx="0.8"/>
<rect x="403" y="553" width="1" height="2" opacity="0.4"/><rect x="407.9" y="553" width="1" height="2" opacity="0.4"/>
</g>
</svg>

<svg class="r" style="left:560px;top:540px" width="22" height="26" viewBox="560 540 22 26">
<defs><linearGradient id="dg" x1="0" y1="0" x2="0.4" y2="1"><stop offset="0" stop-color="#a2a2ff"/><stop offset="1" stop-color="#7272d2"/></linearGradient></defs>
<rect x="571.6" y="543.3" width="8.9" height="18.3" fill="#c8c8ff" stroke="#4c4c98" stroke-width="0.8"/>
<rect x="572.2" y="544.3" width="7" height="9.6" fill="#d6feff"/>
<path d="M572.2 554.2 L575 553.4 L579.2 553 L579.2 560 L572.2 560 Z" fill="#5cc41c"/>
<path d="M562.3 544.5 L571.2 541.3 L571.2 564.5 L562.3 561.6 Z" fill="url(#dg)" stroke="#3a3a80" stroke-width="0.8" stroke-linejoin="miter"/>
<rect x="570.6" y="541" width="1.4" height="23.8" fill="#28285e"/>
<ellipse cx="568.4" cy="553" rx="0.9" ry="1.1" fill="#fff"/>
</svg>

<div class="t" style="left:417.60px;top:546.35px;font-size:14px;line-height:14px;color:#0000ff;transform:scaleX(1.0803);font-weight:bold;">Criar Tabela</div>
<div class="t" style="left:587.80px;top:546.35px;font-size:14px;line-height:14px;color:#0000ff;transform:scaleX(1.0241);font-weight:bold;">S<span style="text-decoration:underline">a</span>ir</div>
<div class="r" style="left:11px;top:581px;width:1011px;height:1px;background:#d7d7d7;"></div>
<svg class="r" style="left:0;top:0" width="1154" height="611" viewBox="0 0 1154 611">
<rect x="14.5" y="105.5" width="876" height="66" fill="none" stroke="#ff0000" stroke-width="3.1" rx="1.2"/>
<rect x="894.5" y="127.5" width="118" height="36" fill="none" stroke="#ff0000" stroke-width="3.1" rx="1.2"/>
<rect x="21.5" y="178.5" width="973" height="140" fill="none" stroke="#ff0000" stroke-width="3.1" rx="1.2"/>
<path d="M897 129.5 H1011 M1010.5 130 V162" stroke="#ffee00" stroke-width="1" fill="none"/>
<path d="M897 129.5 H1011 M1010.5 130 V162" stroke="#111" stroke-width="1" stroke-dasharray="1 1" fill="none"/>
<path d="M1106 109.5 L1030 132.3" stroke="#ff0000" stroke-width="3" stroke-linecap="round" fill="none"/>
<path d="M1018.4 135.7 L1031.4 126.7 L1034.2 136 Z" fill="#ff0000"/>
</svg>
</body></html>
